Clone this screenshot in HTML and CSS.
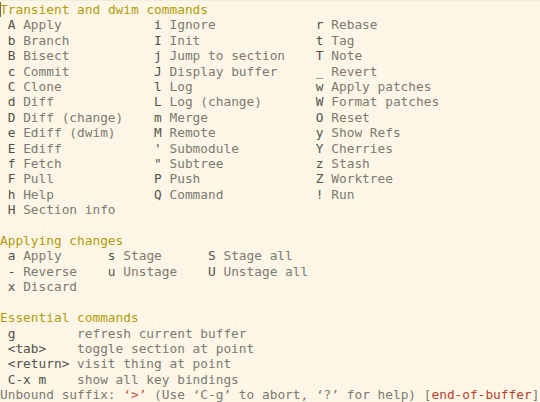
FILE: index.html
```html
<!DOCTYPE html>
<html>
<head>
<meta charset="utf-8">
<link rel="stylesheet" href="styles.css">
</head>
<body>
<main class="frame">
  <section class="group">
    <div class="heading"><span class="cursor">T</span>ransient and dwim commands</div>
    <div class="grid grid-main">
      <div class="col">
        <div class="row"><span class="key">A</span> Apply</div>
        <div class="row"><span class="key">b</span> Branch</div>
        <div class="row"><span class="key">B</span> Bisect</div>
        <div class="row"><span class="key">c</span> Commit</div>
        <div class="row"><span class="key">C</span> Clone</div>
        <div class="row"><span class="key">d</span> Diff</div>
        <div class="row"><span class="key">D</span> Diff (change)</div>
        <div class="row"><span class="key">e</span> Ediff (dwim)</div>
        <div class="row"><span class="key">E</span> Ediff</div>
        <div class="row"><span class="key">f</span> Fetch</div>
        <div class="row"><span class="key">F</span> Pull</div>
        <div class="row"><span class="key">h</span> Help</div>
        <div class="row"><span class="key">H</span> Section info</div>
      </div>
      <div class="col">
        <div class="row"><span class="key">i</span> Ignore</div>
        <div class="row"><span class="key">I</span> Init</div>
        <div class="row"><span class="key">j</span> Jump to section</div>
        <div class="row"><span class="key">J</span> Display buffer</div>
        <div class="row"><span class="key">l</span> Log</div>
        <div class="row"><span class="key">L</span> Log (change)</div>
        <div class="row"><span class="key">m</span> Merge</div>
        <div class="row"><span class="key">M</span> Remote</div>
        <div class="row"><span class="key">'</span> Submodule</div>
        <div class="row"><span class="key">"</span> Subtree</div>
        <div class="row"><span class="key">P</span> Push</div>
        <div class="row"><span class="key">Q</span> Command</div>
      </div>
      <div class="col">
        <div class="row"><span class="key">r</span> Rebase</div>
        <div class="row"><span class="key">t</span> Tag</div>
        <div class="row"><span class="key">T</span> Note</div>
        <div class="row"><span class="key">_</span> Revert</div>
        <div class="row"><span class="key">w</span> Apply patches</div>
        <div class="row"><span class="key">W</span> Format patches</div>
        <div class="row"><span class="key">O</span> Reset</div>
        <div class="row"><span class="key">y</span> Show Refs</div>
        <div class="row"><span class="key">Y</span> Cherries</div>
        <div class="row"><span class="key">z</span> Stash</div>
        <div class="row"><span class="key">Z</span> Worktree</div>
        <div class="row"><span class="key">!</span> Run</div>
      </div>
    </div>
  </section>

  <section class="group">
    <div class="heading">Applying changes</div>
    <div class="grid grid-apply">
      <div class="col">
        <div class="row"><span class="key">a</span> Apply</div>
        <div class="row"><span class="key">-</span> Reverse</div>
        <div class="row"><span class="key">x</span> Discard</div>
      </div>
      <div class="col">
        <div class="row"><span class="key">s</span> Stage</div>
        <div class="row"><span class="key">u</span> Unstage</div>
      </div>
      <div class="col">
        <div class="row"><span class="key">S</span> Stage all</div>
        <div class="row"><span class="key">U</span> Unstage all</div>
      </div>
    </div>
  </section>

  <section class="group">
    <div class="heading">Essential commands</div>
    <div class="grid grid-essential">
      <span class="key">g</span><span class="desc">refresh current buffer</span>
      <span class="key">&lt;tab&gt;</span><span class="desc">toggle section at point</span>
      <span class="key">&lt;return&gt;</span><span class="desc">visit thing at point</span>
      <span class="key">C-x m</span><span class="desc">show all key bindings</span>
    </div>
  </section>
</main>
<footer class="echo">Unbound suffix: <span class="hl">‘&gt;’</span> (Use ‘C-g’ to abort, ‘?’ for help) <span class="cmd-wrap">[<span class="cmd">end-of-buffer</span>]</span></footer>
</body>
</html>
```

FILE: styles.css
```css
html, body {
  margin: 0;
  padding: 0;
}

body {
  width: 540px;
  height: 402px;
  overflow: hidden;
  background: #fdf6e6;
  color: #7b7a72;
  font-family: "DejaVu Sans Mono", "Liberation Mono", monospace;
  font-size: 12.8px;
  line-height: 15.4px;
  border-top: 1px solid #f3ecd9;
  box-sizing: border-box;
}

.frame {
  display: flex;
  flex-direction: column;
  gap: 15.4px;
  padding-top: 1px;
  height: 385px;
}

.heading,
.row,
.echo,
.key,
.desc {
  white-space: pre;
}

.heading {
  color: #b09c0a;
}

.cursor {
  box-shadow: inset 1px 0 0 #6d6a55;
}

.grid {
  display: grid;
  padding-left: 1ch;
}

.grid-main {
  grid-template-columns: 19ch 21ch auto;
}

.grid-apply {
  grid-template-columns: 13ch 13ch auto;
}

.grid-essential {
  grid-template-columns: 9ch auto;
}

.key {
  color: #52524c;
}

.echo {
  display: block;
  color: #7b7a72;
}

.hl {
  color: #c8553f;
}

.cmd {
  color: #b4412f;
}
```
